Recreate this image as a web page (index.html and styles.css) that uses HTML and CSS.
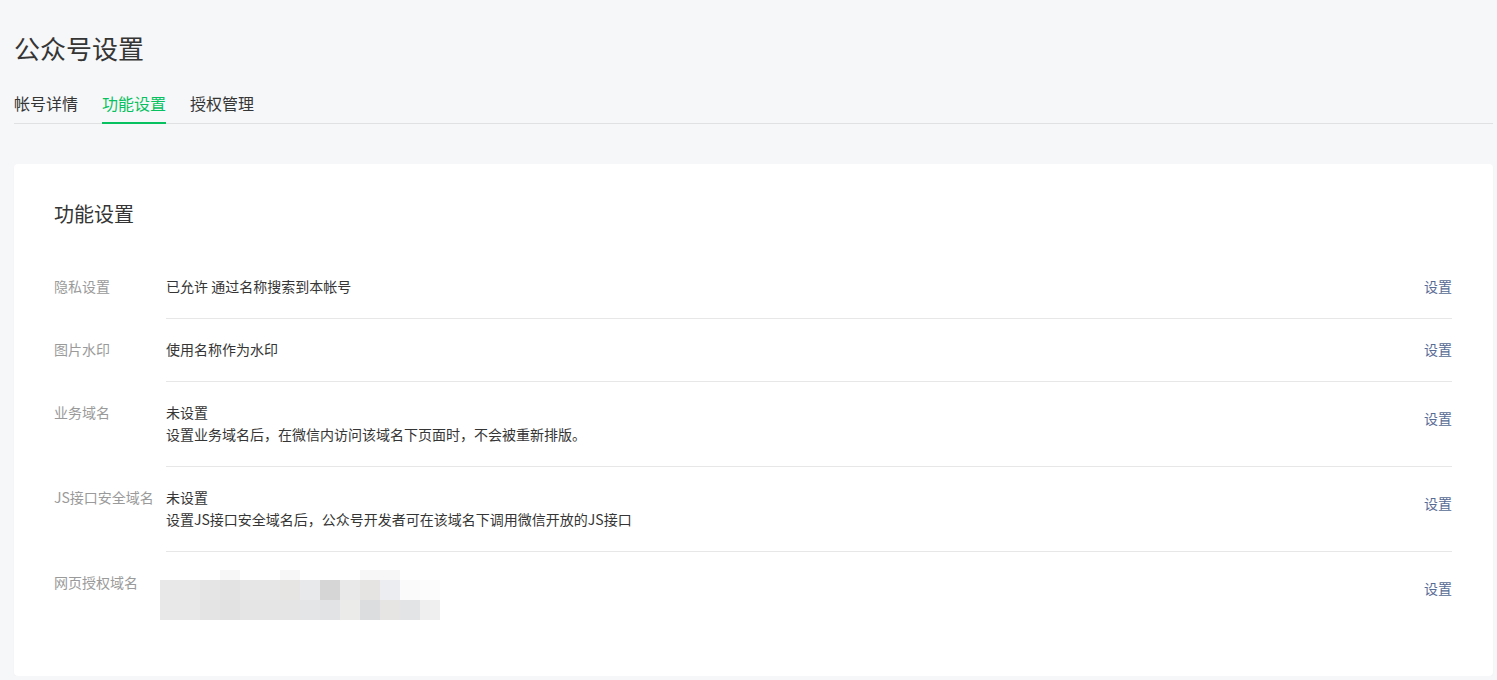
FILE: index.html
```html
<!DOCTYPE html>
<html lang="zh-CN">
<head>
<meta charset="utf-8">
<title>公众号设置</title>
<link rel="stylesheet" href="styles.css">
</head>
<body>
<div class="page">
  <h1 class="page-title">公众号设置</h1>
  <nav class="tabs">
    <a class="tab">帐号详情</a>
    <a class="tab tab-active">功能设置</a>
    <a class="tab">授权管理</a>
  </nav>

  <section class="card">
    <h2 class="card-title">功能设置</h2>

    <div class="row">
      <div class="row-label">隐私设置</div>
      <div class="row-main">
        <div class="row-content">已允许 通过名称搜索到本帐号</div>
        <a class="row-link">设置</a>
      </div>
    </div>

    <div class="row">
      <div class="row-label">图片水印</div>
      <div class="row-main">
        <div class="row-content">使用名称作为水印</div>
        <a class="row-link">设置</a>
      </div>
    </div>

    <div class="row">
      <div class="row-label">业务域名</div>
      <div class="row-main">
        <div class="row-content">
          <div>未设置</div>
          <div>设置业务域名后，在微信内访问该域名下页面时，不会被重新排版。</div>
        </div>
        <a class="row-link row-link-offset">设置</a>
      </div>
    </div>

    <div class="row">
      <div class="row-label">JS接口安全域名</div>
      <div class="row-main">
        <div class="row-content">
          <div>未设置</div>
          <div>设置JS接口安全域名后，公众号开发者可在该域名下调用微信开放的JS接口</div>
        </div>
        <a class="row-link row-link-offset">设置</a>
      </div>
    </div>

    <div class="row row-last">
      <div class="row-label">网页授权域名</div>
      <div class="row-main">
        <div class="row-content">
          <div class="mosaic">
            <span></span><span></span><span></span><span style="background:#f7f7f7"></span><span></span><span></span><span style="background:#f7f7f7"></span><span></span><span></span><span></span><span style="background:#f7f7f7"></span><span style="background:#f7f7f7"></span><span></span><span></span>
            <span style="background:#e8e8e8"></span><span style="background:#e8e8e8"></span><span style="background:#e5e5e5"></span><span style="background:#e3e3e3"></span><span style="background:#e6e6e6"></span><span style="background:#e6e6e6"></span><span style="background:#e7e5e4"></span><span style="background:#e8e9ea"></span><span style="background:#d6d6d6"></span><span style="background:#e9e9e9"></span><span style="background:#e5e4e2"></span><span style="background:#ecedf0"></span><span style="background:#fafafa"></span><span style="background:#fcfcfc"></span>
            <span style="background:#e8e8e8"></span><span style="background:#e8e8e8"></span><span style="background:#e4e4e4"></span><span style="background:#e2e2e2"></span><span style="background:#e5e5e5"></span><span style="background:#e5e5e5"></span><span style="background:#e5e5e5"></span><span style="background:#e4e5e6"></span><span style="background:#e2e3e5"></span><span style="background:#ebebea"></span><span style="background:#dcdddf"></span><span style="background:#e6e5e3"></span><span style="background:#e3e4e6"></span><span style="background:#efefef"></span>
          </div>
        </div>
        <a class="row-link row-link-offset">设置</a>
      </div>
    </div>
  </section>
</div>
</body>
</html>
```

FILE: styles.css
```css
* {
  box-sizing: border-box;
}

html, body {
  margin: 0;
  padding: 0;
  background: #f6f7f9;
}

body {
  font-family: "Noto Sans CJK SC", "Noto Sans", sans-serif;
  color: #353535;
  font-size: 14px;
}

.page {
  padding: 0 4px 0 14px;
}

.page-title {
  margin: 30px 0 0;
  font-size: 26px;
  line-height: 36px;
  font-weight: 400;
  color: #353535;
}

.tabs {
  display: flex;
  gap: 24px;
  margin-top: 25px;
  border-bottom: 1px solid #e0e1e3;
}

.tab {
  display: block;
  font-size: 16px;
  line-height: 24px;
  padding-bottom: 7px;
  border-bottom: 2px solid transparent;
  margin-bottom: -1px;
  color: #353535;
  cursor: pointer;
}

.tab-active {
  color: #07c160;
  border-bottom-color: #07c160;
}

.card {
  margin-top: 40px;
  background: #ffffff;
  border-radius: 4px;
  box-shadow: 0 1px 2px rgba(0, 0, 0, 0.04);
  padding: 36px 41px 35px 40px;
}

.card-title {
  margin: 0 0 28px;
  font-size: 20px;
  line-height: 28px;
  font-weight: 400;
  color: #353535;
}

.row {
  display: flex;
}

.row-label {
  width: 112px;
  flex: none;
  padding-top: 19px;
  line-height: 22px;
  color: #9a9a9a;
}

.row-main {
  flex: 1;
  display: flex;
  align-items: flex-start;
  justify-content: space-between;
  padding: 19px 0 21px;
  border-bottom: 1px solid #e7e7e7;
  line-height: 22px;
}

.row-last .row-main {
  border-bottom: none;
}

.row-content {
  color: #353535;
}

.row-link {
  color: #576b95;
  cursor: pointer;
  flex: none;
}

.row-link-offset {
  margin-top: 6px;
}

.mosaic {
  display: grid;
  grid-template-columns: repeat(14, 20px);
  grid-template-rows: 10px 20px 20px;
  margin: -1px 0 0 -6px;
}

.mosaic span {
  display: block;
}
```
